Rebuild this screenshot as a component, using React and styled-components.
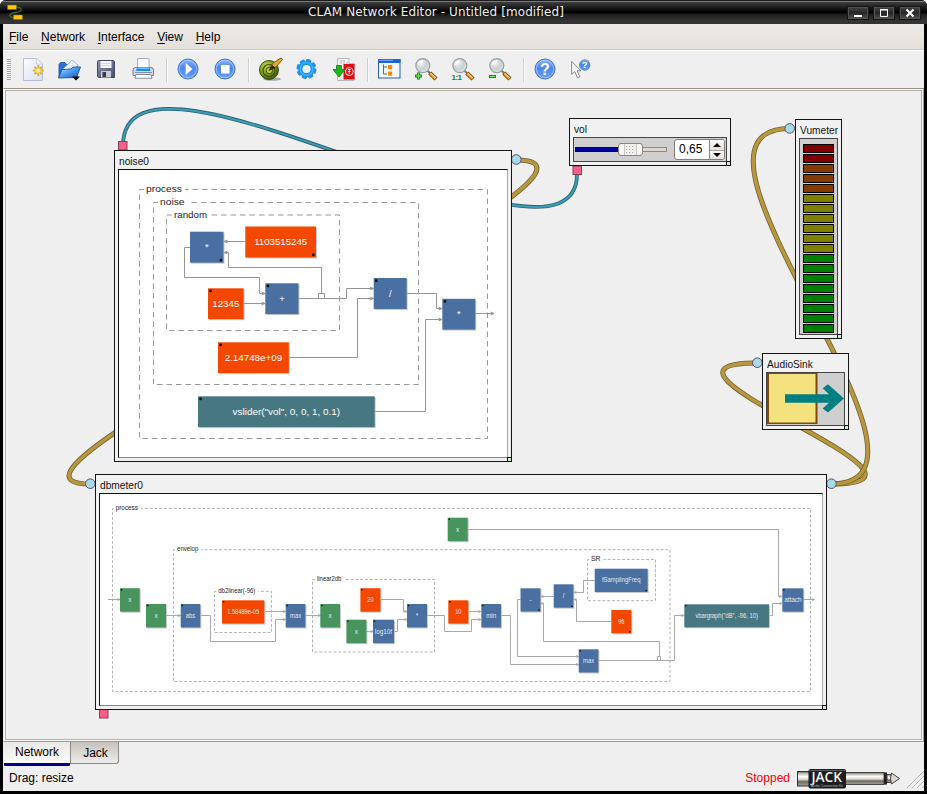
import React from "react";
import styled, { createGlobalStyle } from "styled-components";

const GlobalStyle = createGlobalStyle`
  html, body { margin: 0; padding: 0; background: #fff; }
  * { box-sizing: border-box; }
  svg { display: block; }
`;

const UI = '"Liberation Sans", Arial, sans-serif';

/* ---------- window frame ---------- */

const Window = styled.div`
  width: 927px;
  height: 794px;
  display: flex;
  flex-direction: column;
  background: #000;
  border-radius: 6px 6px 0 0;
  overflow: hidden;
  font: 12px/14px ${UI};
  color: #000;
`;

const TitleBar = styled.header`
  flex: none;
  height: 24px;
  display: flex;
  align-items: center;
  padding: 0 6px 0 7px;
  background: linear-gradient(#1c1c1c 0 1px, #7a7a7a 1px 2px, #3e3e3e 2px, #262626 6px, #060606 11px, #000 13px, #1c1c1c 14px, #343434 21px, #343434 24px);
`;

const Title = styled.h1`
  flex: 1;
  margin: 0;
  padding-left: 2px;
  font: 12px/24px "DejaVu Sans", sans-serif;
  letter-spacing: 0.09px;
  text-align: center;
  color: #eeeeee;
`;

const WindowButtons = styled.div`
  display: flex;
  gap: 4px;
  margin-top: 1px;
`;

const WindowButton = styled.button`
  width: 22px;
  height: 14px;
  padding: 0;
  display: grid;
  place-items: center;
  border: 1px solid #171717;
  outline: 0;
  background: linear-gradient(#444, #262626 50%, #555);
  box-shadow: inset 0 0 0 1px #505050;
`;

const Client = styled.div`
  flex: 1;
  display: flex;
  flex-direction: column;
  margin: 0 3px 3px;
  background: #efefef;
  min-height: 0;
`;

const MenuBar = styled.nav`
  height: 27px;
  flex: none;
  display: flex;
  gap: 12.7px;
  padding: 6px 0 0 6px;
  background: linear-gradient(#eeebe7, #e3dfd9);
  border-bottom: 1px solid #fff;
  box-shadow: inset 0 -1px #d0cbc5;
`;

const MenuItem = styled.span`
  &::first-letter {
    text-decoration: underline;
    text-decoration-thickness: 1px;
    text-underline-offset: 2px;
  }
  display: block;
`;

const ToolBar = styled.div`
  height: 37px;
  flex: none;
  display: flex;
  align-items: center;
`;

const Grip = styled.div`
  width: 4px;
  height: 22px;
  margin: 0 3px 0 4px;
  background: repeating-linear-gradient(#a9a49e 0 1px, #f4f4f4 1px 2px);
`;

const ToolButton = styled.button`
  width: 37px;
  height: 36px;
  padding: 0;
  border: 0;
  background: none;
  display: grid;
  place-items: center;
`;

const Separator = styled.div`
  width: 2px;
  height: 24px;
  margin: 0 2px 0 4px;
  background: linear-gradient(90deg, #d2cfcb 50%, #fafafa 50%);
`;

const CanvasFrame = styled.main`
  flex: none;
  height: 654px;
  border: 1px solid #aaa49b;
  border-color: #98938b #a59e96 #a39a94 #efefef;
  padding: 1px;
  background: #f7f5f2;
`;

const Canvas = styled.div`
  position: relative;
  width: 917px;
  height: 650px;
  border: 1px solid #b9b0a8;
  background: #efefef;
  overflow: hidden;
`;

/* ---------- canvas items ---------- */

const ORIGIN_X = 6;
const ORIGIN_Y = 91;

const Cables = styled.svg`
  position: absolute;
  left: 0;
  top: 0;
  width: 915px;
  height: 648px;
`;

const Node = styled.section`
  position: absolute;
  left: ${(p) => p.$x - ORIGIN_X}px;
  top: ${(p) => p.$y - ORIGIN_Y}px;
  width: ${(p) => p.$w}px;
  height: ${(p) => p.$h}px;
  display: flex;
  flex-direction: column;
  padding: 0 3px 3px;
  border: 1px solid #141414;
  background: #f1f1f1;
`;

const NodeTitle = styled.h2`
  flex: none;
  height: 18px;
  margin: 0;
  padding: 5px 0 0 1px;
  font: 10.2px/12px ${UI};
  color: #111;
  white-space: nowrap;
`;

const NodeBody = styled.div`
  flex: 1;
  min-height: 0;
  display: flex;
  border: 1px solid;
  border-color: ${(p) => (p.$plain ? "#111 #aaa #888 #111" : "#444")};
  background: ${(p) => (p.$plain ? "#fff" : "#cfcfcf")};
`;

const Resizer = styled.i`
  position: absolute;
  right: -1px;
  bottom: -1px;
  width: 5px;
  height: 5px;
  border: 1px solid #111;
  background: #cdf0cd;
`;

function Processing({ title, plain, children, ...box }) {
  return (
    <Node {...box}>
      <NodeTitle>{title}</NodeTitle>
      <NodeBody $plain={plain}>{children}</NodeBody>
      <Resizer />
    </Node>
  );
}

const VolumeRow = styled.div`
  flex: 1;
  display: flex;
  align-items: center;
  padding: 0 2px 0 1px;
  gap: 7px;
`;

const Groove = styled.div`
  width: 92px;
  height: 5px;
  display: flex;
  align-items: center;
  border: 1px solid #8f8a84;
  background: #ded6cd;
`;

const Filled = styled.div`
  width: 43px;
  height: 5px;
  flex: none;
  background: #00009c;
  border: 1px solid #000070;
  margin-left: -1px;
`;

const Handle = styled.div`
  flex: none;
  width: 25px;
  height: 13px;
  border: 1px solid #8b857f;
  border-radius: 3px;
  display: grid;
  place-items: center;
  background: linear-gradient(90deg, #f6f5f3 0 5px, #c9c5c0 5px 6px, #f1efed 6px 17px, #c9c5c0 17px 18px, #f6f5f3 18px);
`;

const SpinBox = styled.div`
  flex: none;
  width: 51px;
  height: 21px;
  display: flex;
  border: 1px solid #827d77;
  border-radius: 3px;
  background: #fff;
  overflow: hidden;
`;

const SpinValue = styled.span`
  flex: 1;
  padding: 2px 0 0 4px;
  font: 12px/14px ${UI};
`;

const SpinArrows = styled.div`
  width: 15px;
  display: grid;
  grid-template-rows: 1fr 1fr;
  border-left: 1px solid #8b857f;
`;

const SpinArrow = styled.span`
  display: grid;
  place-items: center;
  background: linear-gradient(#fafafa, #e4e0dc);
  & + & { border-top: 1px solid #a8a29c; }
`;

const Meter = styled.div`
  flex: 1;
  display: flex;
  flex-direction: column;
  align-items: center;
  gap: 1px;
  padding-top: 5px;
`;

const Led = styled.div`
  width: 31px;
  height: 9px;
  flex: none;
  border: 1px solid #000;
  background: ${(p) => p.$color};
`;

/* ---------- bottom area ---------- */

const Tabs = styled.div`
  flex: none;
  height: 23px;
  display: flex;
  align-items: flex-start;
`;

const Tab = styled.div`
  width: ${(p) => (p.$active ? 66 : 49)}px;
  height: ${(p) => (p.$active ? 24 : 22)}px;
  margin: ${(p) => (p.$active ? "0 0 0 1px" : "0")};
  padding: ${(p) => (p.$active ? "3px 0 0" : "4px 0 0 2px")};
  text-align: center;
  background: ${(p) => (p.$active ? "linear-gradient(#e9e8e6, #fbfbfa)" : "linear-gradient(#c6c1bb, #eeedec)")};
  border-style: solid;
  border-width: ${(p) => (p.$active ? "0 0 3px" : "0 1px 1px")};
  border-color: ${(p) => (p.$active ? "#00008c" : "#8d8781")};
  border-radius: ${(p) => (p.$active ? "0 0 1px 1px" : "0 0 3px 0")};
`;

const StatusBar = styled.footer`
  flex: 1;
  display: flex;
  align-items: center;
  padding: 0 0 0 6px;
`;

const StatusText = styled.span`
  flex: 1;
`;

const Stopped = styled.span`
  color: #ff0000;
  margin-right: 6px;
`;

const PlugSlot = styled.span`
  margin-right: 4px;
`;

/* ---------- toolbar icons ---------- */

const Icon = ({ children }) => (
  <svg width="25" height="25" viewBox="0 0 25 25">{children}</svg>
);

const HiddenSvg = styled.svg`
  position: absolute;
`;

const Defs = () => (
  <HiddenSvg width="0" height="0">
    <defs>
      <linearGradient id="blueBall" x1="0" y1="0" x2="0" y2="1">
        <stop offset="0" stopColor="#8db8fb" />
        <stop offset=".45" stopColor="#4a86f0" />
        <stop offset="1" stopColor="#6aa2ff" />
      </linearGradient>
      <linearGradient id="folder" x1="0" y1="0" x2="1" y2="1">
        <stop offset="0" stopColor="#bfe0ff" />
        <stop offset=".5" stopColor="#4a97ee" />
        <stop offset="1" stopColor="#1453bc" />
      </linearGradient>
      <linearGradient id="page" x1="0" y1="0" x2="1" y2="1">
        <stop offset="0" stopColor="#fdfdff" />
        <stop offset="1" stopColor="#d9dff2" />
      </linearGradient>
      <linearGradient id="disk" x1="0" y1="0" x2="1" y2="1">
        <stop offset="0" stopColor="#8d90ad" />
        <stop offset="1" stopColor="#4b4e66" />
      </linearGradient>
      <radialGradient id="lens" cx=".35" cy=".3" r=".8">
        <stop offset="0" stopColor="#f3f6f6" />
        <stop offset=".55" stopColor="#c8d1d1" />
        <stop offset="1" stopColor="#dfe6e6" />
      </radialGradient>
      <radialGradient id="olive" cx=".35" cy=".3" r=".8">
        <stop offset="0" stopColor="#c2d64a" />
        <stop offset=".6" stopColor="#6f8d10" />
        <stop offset="1" stopColor="#33450a" />
      </radialGradient>
      <linearGradient id="metal" x1="0" y1="0" x2="0" y2="1">
        <stop offset="0" stopColor="#55524c" />
        <stop offset=".12" stopColor="#b8b4a8" />
        <stop offset=".35" stopColor="#ffffff" />
        <stop offset=".55" stopColor="#d9d5c9" />
        <stop offset=".7" stopColor="#6e6a60" />
        <stop offset="1" stopColor="#a8a498" />
      </linearGradient>
    </defs>
  </HiddenSvg>
);

const NewIcon = () => (
  <Icon>
    <path d="M3.5 1.5H16.5L22.5 7V23.5H3.5Z" fill="url(#page)" stroke="#b6bdd4" />
    <path d="M16.5 1.5V7H22.5Z" fill="#fff" stroke="#c2c8dc" strokeWidth=".8" />
    <path d="M18.3 8v11M12.8 13.5h11M14.5 9.7l7.6 7.6M22.1 9.7l-7.6 7.6" stroke="#e9ad22" strokeWidth="2" />
    <circle cx="18.3" cy="13.5" r="2.6" fill="#fff3a0" stroke="#f2c63c" />
  </Icon>
);

const OpenIcon = () => (
  <Icon>
    <path d="M2 7.5 3.5 5.5H8L9.5 7.5H20V20H2Z" fill="#2a6fd6" stroke="#174fa8" strokeWidth=".8" />
    <path d="M6 12 15 3l6 5-6 9Z" fill="#f6f8ff" stroke="#8ea3d4" strokeWidth=".8" />
    <path d="M9 10l5-4.5M11 12l6-5" stroke="#c2cfee" />
    <path d="M1.5 21 5 12.5 14 12 16 10H23.5L19.5 20.5Z" fill="url(#folder)" stroke="#1550b4" strokeWidth=".9" />
    <path d="M15 19.5h8l-4 4Z" fill="#000" />
  </Icon>
);

const SaveIcon = () => (
  <Icon>
    <path d="M3.5 4.5Q3.5 3.5 4.5 3.5H19.5L20.5 4.5V20.5H4.5L3.5 19.5Z" fill="url(#disk)" stroke="#454861" />
    <path d="M6.5 4h11v7h-11Z" fill="#f4f5fb" />
    <path d="M7.5 6.5h9M7.5 8.5h9" stroke="#d2d5e4" />
    <path d="M7 14h10v6.5H7Z" fill="#c8cad9" />
    <path d="M8.5 15h3.5v5H8.5Z" fill="#363950" />
  </Icon>
);

const PrintIcon = () => (
  <Icon>
    <path d="M6.5 12V1.5H18V12" fill="#f7f9ff" stroke="#a7aec2" />
    <path d="M2 13Q2 10.5 4.5 10.5H20Q22.5 10.5 22.5 13V18.5H2Z" fill="#d4d7e4" stroke="#777d96" />
    <path d="M6 10.500h12.500l1 3.500H5Z" fill="#1c8bf0" />
    <path d="M6.500 11.200h11.500" stroke="#9cdcff" />
    <path d="M5 17.500h15l1 3.800H4Z" fill="#fff" stroke="#868ca3" />
    <path d="M4 15.500h17" stroke="#8a90a8" />
  </Icon>
);

const Ball = ({ r = 10 }) => (
  <>
    <circle cx="12" cy="12" r={r} fill="url(#blueBall)" stroke="#4674c8" />
    <circle cx="12" cy="12" r={r - 1.3} fill="none" stroke="#a9caff" strokeWidth=".8" />
  </>
);

const PlayIcon = () => (
  <Icon><Ball /><path d="M9.700 6 16.500 12 9.700 18Z" fill="#fff" /></Icon>
);

const StopIcon = () => (
  <Icon><Ball /><path d="M8 8h8.500v8.500H8Z" fill="#fff" /></Icon>
);

const TargetIcon = () => (
  <Icon>
    <ellipse cx="14" cy="22" rx="9" ry="1.8" fill="#555" opacity=".45" />
    <circle cx="11" cy="13" r="9.5" fill="url(#olive)" stroke="#3d5208" />
    <circle cx="11" cy="13.5" r="6" fill="none" stroke="#3c5008" strokeWidth="1.1" />
    <circle cx="11.3" cy="13.5" r="3.2" fill="#b5cf3e" stroke="#3d5208" />
    <path d="M11 13.5 15 6l8-5 1.500 1.500-6 7Z" fill="#e7a92c" stroke="#5c3a0a" strokeWidth=".8" />
    <path d="M11 13.5 14 8l3.500 3Z" fill="#2b2208" />
  </Icon>
);

const GearIcon = () => (
  <Icon>
    <g fill="#1e93ee">
      {[0, 45, 90, 135, 180, 225, 270, 315].map((a) => (
        <rect key={a} x="8.800" y="2" width="5.400" height="5" rx="1.500" transform={`rotate(${a + 15} 11.5 12)`} />
      ))}
    </g>
    <circle cx="11.5" cy="12" r="6.1" fill="none" stroke="#1e93ee" strokeWidth="4" />
    <circle cx="11.5" cy="12" r="6.4" fill="none" stroke="#49b0fb" strokeWidth="1.200" />
  </Icon>
);

const ExportIcon = () => (
  <Icon>
    <path d="M5.5 1.5H17L22 6.5V23.5H5.5Z" fill="#f2f2f4" stroke="#b9b9c0" />
    <path d="M8 4h6M8 6h8" stroke="#aeb0c0" strokeDasharray="2 1" />
    <path d="M17 1.5V6.5H22" fill="#fff" stroke="#b9b9c0" />
    <rect x="11.5" y="7" width="11" height="15.5" fill="#d90f14" />
    <circle cx="17.3" cy="14.6" r="3.8" fill="none" stroke="#ffc9c9" strokeWidth="1.1" />
    <path d="M16 12.5h2.5M16 14.5h2.5M17.2 12v5" stroke="#fff" strokeWidth=".9" />
    <path d="M4.500 8.500h5v4H13L7 20 1 12.500h3.500Z" fill="#1fb41f" stroke="#0a7d0a" strokeWidth=".8" />
  </Icon>
);

const TreeIcon = () => (
  <Icon>
    <rect x="1.5" y="2.5" width="21.5" height="18.5" fill="#f2f6fd" stroke="#2a5eb0" />
    <rect x="1" y="2" width="22.5" height="4" fill="#1c62dd" />
    <path d="M2 3.3h14" stroke="#7db0ff" />
    <path d="M6.5 7.500v9.500H10M6.5 10H10" fill="none" stroke="#666" />
    <rect x="11" y="8" width="4.2" height="4.2" fill="#fb8a0a" />
    <rect x="11" y="14.5" width="4.2" height="4.2" fill="#fb8a0a" />
  </Icon>
);

const Loupe = ({ children }) => (
  <Icon>
    <path d="M13.5 13.700 17 17" stroke="#777" strokeWidth="2" />
    <path d="M15.800 16 22 22" stroke="#73410a" strokeWidth="4.4" />
    <path d="M16.200 16.400 21.5 21.5" stroke="#f3a83a" strokeWidth="2.6" />
    <path d="M16.700 16 21.8 20.7" stroke="#ffe3ac" strokeWidth=".8" />
    <circle cx="8.8" cy="8.600" r="7" fill="url(#lens)" stroke="#9a9f9f" strokeWidth="1.2" />
    <path d="M4.5 8Q5 4.5 9 4" fill="none" stroke="#fff" strokeWidth="1.4" />
    {children}
  </Icon>
);

const ZoomInIcon = () => (
  <Loupe>
    <path d="M4.5 15.5v7M1 19h7" stroke="#0c8a0c" strokeWidth="3" />
    <path d="M4.5 16.300v5.400M1.800 19h5.400" stroke="#7cf06a" strokeWidth="1.1" />
  </Loupe>
);
const ZoomOutIcon = () => (
  <Loupe>
    <path d="M1 19.5h7" stroke="#0c8a0c" strokeWidth="3" />
    <path d="M1.800 19.500h5.400" stroke="#7cf06a" strokeWidth="1.1" />
  </Loupe>
);
const ZoomResetIcon = () => (
  <Loupe>
    <text x=".5" y="22.8" fontFamily="Liberation Sans" fontWeight="700" fontSize="8" textLength="10.5" fill="#0b8a0b">1:1</text>
  </Loupe>
);

const HelpIcon = () => (
  <Icon>
    <Ball />
    <text x="12" y="17.8" textAnchor="middle" fontFamily="Liberation Sans" fontWeight="700" fontSize="16" fill="#fff">?</text>
  </Icon>
);

const WhatsThisIcon = () => (
  <Icon>
    <path d="M1.7 4.5V17.3L4.8 14.6 7.5 20.8 9.8 19.7 7.2 13.8H11Z" fill="#fff" stroke="#777" strokeWidth=".9" />
    <circle cx="14.7" cy="8" r="5.2" fill="url(#blueBall)" stroke="#3b6bc8" strokeWidth=".7" />
    <text x="14.8" y="11.3" textAnchor="middle" fontFamily="Liberation Sans" fontWeight="700" fontSize="9" fill="#fff">?</text>
  </Icon>
);

const TOOLS = [
  [NewIcon, OpenIcon, SaveIcon, PrintIcon],
  [PlayIcon, StopIcon],
  [TargetIcon, GearIcon, ExportIcon],
  [TreeIcon, ZoomInIcon, ZoomResetIcon, ZoomOutIcon],
  [HelpIcon, WhatsThisIcon],
];

/* ---------- block diagrams ---------- */

const BLUE = "#4a6fa1";
const ORANGE = "#f44800";
const GREEN = "#47945e";
const TEAL = "#477881";

function Group({ x, y, r, b, label, lx, lw, size, small }) {
  const dash = small ? "3 1.8" : "5.5 4";
  return (
    <g>
      <path
        d={`M${lx - 2} ${y}H${x}V${b}H${r}V${y}H${lx + lw + 3}`}
        fill="none"
        stroke={small ? "#b5b5b5" : "#999"}
        strokeDasharray={dash}
      />
      <text x={lx} y={y + size * 0.27} fontSize={size} textLength={lw} lengthAdjust="spacingAndGlyphs" fill="#222">{label}</text>
    </g>
  );
}

function Block({ x, y, w, h, fill, label, tw, size, dot = "tl" }) {
  const d = size > 8 ? 2.6 : 1.5;
  const gap = size > 8 ? 1.3 : 0.8;
  const dx = dot === "tl" ? x + gap : x + w - gap - d;
  const dy = dot === "tl" ? y + gap : y + h - gap - d;
  return (
    <g>
      <rect x={x + 1} y={y + 1} width={w} height={h} fill="#bbb" opacity=".8" />
      <rect x={x} y={y} width={w} height={h} fill={fill} />
      <rect x={dx} y={dy} width={d} height={d} rx={d / 3} fill="#111" />
      <text
        x={x + w / 2}
        y={y + h / 2 + size * 0.33}
        textAnchor="middle"
        fontSize={size}
        textLength={tw}
        lengthAdjust="spacingAndGlyphs"
        fill={size > 8 ? "#fff" : "#e4e9ee"}
      >
        {label}
      </text>
    </g>
  );
}

function Wires({ lines, arrows, a, color }) {
  return (
    <g fill="none" stroke={color} strokeWidth="1">
      {lines.map((d) => <path key={d} d={d} />)}
      {arrows.map(([x, y, s = 1]) => (
        <path key={`${x},${y}`} d={`M${x - a * 1.6 * s} ${y - a * 0.65}L${x} ${y}L${x - a * 1.6 * s} ${y + a * 0.65}`} />
      ))}
    </g>
  );
}

const NOISE_GROUPS = [
  { x: 139.5, y: 189.5, r: 487.5, b: 438.5, label: "process", lx: 146, lw: 36 },
  { x: 153.5, y: 202.5, r: 418.5, b: 384.5, label: "noise", lx: 160, lw: 24.5 },
  { x: 166.5, y: 215, r: 339.5, b: 330.5, label: "random", lx: 174, lw: 33 },
];
const NOISE_BLOCKS = [
  { x: 190, y: 231.7, w: 33.5, h: 31, fill: BLUE, label: "*", dot: "br" },
  { x: 245.3, y: 226.5, w: 70.7, h: 31, fill: ORANGE, label: "1103515245", tw: 53, dot: "br" },
  { x: 208, y: 288.3, w: 35.6, h: 30.8, fill: ORANGE, label: "12345", tw: 27 },
  { x: 265.3, y: 283.3, w: 33.2, h: 30.8, fill: BLUE, label: "+" },
  { x: 373.7, y: 278, w: 33, h: 31, fill: BLUE, label: "/" },
  { x: 442.3, y: 298.8, w: 33, h: 30.8, fill: BLUE, label: "*" },
  { x: 218, y: 342.3, w: 70.8, h: 30.8, fill: ORANGE, label: "2.14748e+09", tw: 57.5 },
  { x: 198, y: 396.3, w: 176.7, h: 30.8, fill: TEAL, label: 'vslider("vol", 0, 0, 1, 0.1)', tw: 107.5 },
];
const NOISE_WIRES = [
  "M245 241.5H224",
  "M190 247.5H184.5V277.5H259.5V293.5H265",
  "M321.5 293.5V267.5H228.5V252.5H224",
  "M318.5 298.5V293.5H324.5V298.5",
  "M298 298.5H346.5V288.5H373.5",
  "M243 303.5H265",
  "M289 357.5H357.5V298.5H373.5",
  "M406.5 293.5H436.5V308.5H442",
  "M375 411.5H425.5V319.5H442",
  "M475 313.5H494",
];
const NOISE_ARROWS = [
  [224, 241.5, -1], [224, 252.5, -1], [265, 293.5], [265, 303.5],
  [373.5, 288.5], [373.5, 298.5], [442, 308.5], [442, 319.5], [494, 313.5],
];

const NoiseDiagram = () => (
  <svg width="388" height="288" viewBox="119 170 388 288" fontFamily="Liberation Sans, Arial, sans-serif">
    {NOISE_GROUPS.map((g) => <Group key={g.label} size={9.3} {...g} />)}
    <Wires lines={NOISE_WIRES} arrows={NOISE_ARROWS} a={2.2} color="#959595" />
    {NOISE_BLOCKS.map((b) => <Block key={`${b.x}${b.label}`} size={9.3} {...b} />)}
  </svg>
);

const METER_GROUPS = [
  { x: 112.5, y: 508.5, r: 810.5, b: 691.5, label: "process", lx: 115.7, lw: 22.3 },
  { x: 173.5, y: 549.7, r: 670, b: 681.5, label: "envelop", lx: 177, lw: 21.3 },
  { x: 214.5, y: 591.3, r: 271.5, b: 632.5, label: "db2linear(-96)", lx: 218.3, lw: 37 },
  { x: 312.5, y: 579.5, r: 434.5, b: 652, label: "linear2db", lx: 317, lw: 24.3 },
  { x: 587.5, y: 559.5, r: 655.5, b: 600.7, label: "SR", lx: 591, lw: 9.6 },
];
const METER_BLOCKS = [
  { x: 120, y: 588.2, w: 19.7, h: 23.5, fill: GREEN, label: "x" },
  { x: 146, y: 604, w: 20, h: 23.5, fill: GREEN, label: "x" },
  { x: 180.7, y: 604, w: 19.6, h: 23.5, fill: BLUE, label: "abs", tw: 9.3 },
  { x: 222, y: 600.3, w: 42.3, h: 23.3, fill: ORANGE, label: "1.58489e-05", tw: 32 },
  { x: 285.7, y: 604, w: 19.7, h: 23.5, fill: BLUE, label: "max", tw: 11 },
  { x: 320.3, y: 604, w: 19.7, h: 23.5, fill: GREEN, label: "x" },
  { x: 346.4, y: 619.7, w: 20, h: 23.5, fill: GREEN, label: "x" },
  { x: 373, y: 619.7, w: 21, h: 23.5, fill: BLUE, label: "log10f", tw: 17.3 },
  { x: 360.4, y: 588.2, w: 20, h: 23.5, fill: ORANGE, label: "20", tw: 6.3 },
  { x: 407, y: 604, w: 20, h: 23.5, fill: BLUE, label: "*" },
  { x: 448.3, y: 600.3, w: 20, h: 23.3, fill: ORANGE, label: "10", tw: 6.3 },
  { x: 481.3, y: 604, w: 19.7, h: 23.5, fill: BLUE, label: "min", tw: 10 },
  { x: 447.7, y: 517.7, w: 20, h: 23.5, fill: GREEN, label: "x" },
  { x: 520.5, y: 588.3, w: 20, h: 23.3, fill: BLUE, label: "-", dot: "br" },
  { x: 553.7, y: 584.3, w: 19.7, h: 23.4, fill: BLUE, label: "/", dot: "br" },
  { x: 594.7, y: 568.7, w: 53, h: 23.3, fill: BLUE, label: "fSamplingFreq", tw: 38.5, dot: "br" },
  { x: 611.3, y: 610, w: 20, h: 23.3, fill: ORANGE, label: "96", tw: 6.3, dot: "br" },
  { x: 578.7, y: 649.3, w: 19.7, h: 23.2, fill: BLUE, label: "max", tw: 11 },
  { x: 684.3, y: 604.3, w: 84.7, h: 23, fill: TEAL, label: 'vbargraph("dB", -96, 10)', tw: 62.5 },
  { x: 782.3, y: 588.3, w: 21, h: 23.4, fill: BLUE, label: "attach", tw: 17.3 },
];
const METER_WIRES = [
  "M108 599.5H120",
  "M166 615.5H180.5",
  "M200.5 615.5H210.5V641.5H275.5V619.5H285.5",
  "M264.5 611.5H285.5",
  "M305.5 615.5H320.5",
  "M380.5 599.5H403.5V611.5H407",
  "M366.5 631.5H373",
  "M394 631.5H397.5V619.5H407",
  "M427 615.5H444.5V631.5H471.5V619.5H481",
  "M468.5 611.5H481",
  "M501 615.5H510.5V664.5H578.5",
  "M520.5 599.5H517.5V656.5H578.5",
  "M553.5 596.5H540.5",
  "M594.5 580.5H583.5V592.5H573.5",
  "M611.5 621.5H576.5V599.5H573.5",
  "M598.5 660.5H674.5V615.5H684",
  "M657.5 660.5V656.5H660.5V660.5",
  "M659.5 656.5V641.5H543.5V603.5H540.5",
  "M769 615.5H772.5V603.5H782",
  "M467.5 529.5H778.5V596.5H782",
  "M803.5 599.5H814.5",
];
const METER_ARROWS = [
  [120, 599.5], [180.5, 615.5], [285.5, 619.5], [285.5, 611.5], [320.5, 615.5], [407, 611.5],
  [373, 631.5], [407, 619.5], [481, 619.5], [481, 611.5], [578.5, 664.5], [578.5, 656.5],
  [541, 596.5, -1], [574, 592.5, -1], [574, 599.5, -1], [684, 615.5], [541, 603.5, -1],
  [782, 603.5], [782, 596.5], [814.5, 599.5],
];

const MeterDiagram = () => (
  <svg width="722" height="211" viewBox="100 494 722 211" fontFamily="Liberation Sans, Arial, sans-serif">
    {METER_GROUPS.map((g) => <Group key={g.label} size={6.6} small {...g} />)}
    <Wires lines={METER_WIRES} arrows={METER_ARROWS} a={1.5} color="#a8a8a8" />
    {METER_BLOCKS.map((b) => <Block key={`${b.x}${b.label}`} size={6.4} {...b} />)}
  </svg>
);

const CONTROL_CABLE = "M577 174C577 301 123 10 123 146";
const AUDIO_CABLES = [
  "M516 160C668 160 -62 484 90 484",
  "M831 484C974 484 614 363 757 363",
  "M831 484C973 484 648 128.5 790 128.5",
];
const CONTROL_PORTS = [[118.5, 141.5], [573, 166], [99.5, 709.5]];
const AUDIO_PORTS = [[516.3, 159.5], [90.3, 483.7], [789.7, 128.4], [757.3, 362.7], [831.4, 483.7]];

const CableLayer = () => (
  <Cables viewBox="6 91 915 648" fill="none">
    <path d={CONTROL_CABLE} stroke="#2b6470" strokeWidth="3.8" />
    <path d={CONTROL_CABLE} stroke="#3f9cb8" strokeWidth="2" />
    {AUDIO_CABLES.map((d) => (
      <g key={d}>
        <path d={d} stroke="#6f6530" strokeWidth="5" />
        <path d={d} stroke="#b9963f" strokeWidth="3.4" />
      </g>
    ))}
    {CONTROL_PORTS.map(([x, y]) => (
      <rect key={x} x={x} y={y} width="8.5" height="8.5" fill="#f95f86" stroke="#86405a" />
    ))}
    {AUDIO_PORTS.map(([x, y]) => (
      <circle key={x} cx={x} cy={y} r="4.8" fill="#a8dbea" stroke="#5d4c62" />
    ))}
  </Cables>
);

const LEDS = [
  ...Array(2).fill("#800000"),
  ...Array(3).fill("#853b00"),
  ...Array(6).fill("#808000"),
  ...Array(8).fill("#008000"),
];

const SinkArt = () => (
  <svg width="77" height="51" viewBox="767 374 77 51">
    <rect x="768" y="374" width="48.5" height="50.5" fill="#f4e27e" stroke="#7d4a08" strokeWidth="2" />
    <path d="M785 395.3H829L822.7 389.3 828 385.3 844 399.4 828 413.5 822.7 409.5 829 403.7H785Z" fill="#008080" />
  </svg>
);

const JackPlug = () => (
  <svg width="106" height="21" viewBox="796 768 106 21">
    <rect x="797.5" y="771.5" width="12" height="14.5" fill="url(#metal)" stroke="#333" />
    <rect x="845" y="772.5" width="39" height="12" fill="url(#metal)" stroke="#444" />
    <path d="M884 772.5h3v12h-3z" fill="#222" />
    <path d="M887 774.5h4v8h-4z" fill="url(#metal)" stroke="#444" />
    <path d="M891.5 773l8 5.5-8 5.5-1-5.5z" fill="#dad7cc" stroke="#444" />
    <rect x="808.5" y="769" width="37.5" height="19.5" rx="2" fill="#1c1e1f" />
    <path d="M809 770.5h36.5" stroke="#5c6062" />
    <text x="811.5" y="782.3" fontFamily="Open Sans" fontWeight="600" fontSize="14.2" textLength="30.5" lengthAdjust="spacingAndGlyphs" fill="#f2f2f2">JACK</text>
    <text x="811" y="786.8" fontFamily="Liberation Sans" fontSize="3.6" textLength="32" fill="#aaa">Audio Connection Kit</text>
  </svg>
);

const SizeGrip = () => (
  <svg width="18" height="20" viewBox="0 0 18 20">
    <path d="M1 20 18 3M6 20 18 8M11 20 18 13M16 20l2-2" stroke="#b5b0ab" />
    <path d="M2 20 18 4M7 20 18 9M12 20 18 14" stroke="#fff" />
  </svg>
);

const AppIcon = () => (
  <svg width="16" height="16" viewBox="0 0 16 16">
    <path d="M8 3.5C16 2 16 8 9 8.5S0 13 7 13.5" fill="none" stroke="#3f6a2a" strokeWidth="1.3" />
    <rect x=".5" y="1" width="9" height="4.5" fill="#fbc50c" stroke="#8a6500" strokeWidth=".5" />
    <rect x="6.5" y="11" width="9" height="4.5" fill="#fbc50c" stroke="#8a6500" strokeWidth=".5" />
  </svg>
);

export default function App() {
  return (
    <>
      <GlobalStyle />
      <Defs />
      <Window>
        <TitleBar>
          <AppIcon />
          <Title>CLAM Network Editor - Untitled [modified]</Title>
          <WindowButtons>
            <WindowButton>
              <svg width="10" height="10"><path d="M1 8h8" stroke="#fff" strokeWidth="2" /></svg>
            </WindowButton>
            <WindowButton>
              <svg width="10" height="10"><path d="M1.5 1.5h7v7h-7zM1 2h8" fill="none" stroke="#fff" /></svg>
            </WindowButton>
            <WindowButton>
              <svg width="10" height="10"><path d="M1.5 1.5l7 7M8.5 1.5l-7 7" stroke="#fff" strokeWidth="2" /></svg>
            </WindowButton>
          </WindowButtons>
        </TitleBar>
        <Client>
          <MenuBar>
            {["File", "Network", "Interface", "View", "Help"].map((m) => <MenuItem key={m}>{m}</MenuItem>)}
          </MenuBar>
          <ToolBar>
            <Grip />
            {TOOLS.map((group, i) => (
              <React.Fragment key={i}>
                {i > 0 && <Separator />}
                {group.map((Glyph, j) => <ToolButton key={j}><Glyph /></ToolButton>)}
              </React.Fragment>
            ))}
          </ToolBar>
          <CanvasFrame>
            <Canvas>
              <CableLayer />
              <Processing title="noise0" plain $x={114} $y={150} $w={398} $h={312}>
                <NoiseDiagram />
              </Processing>
              <Processing title="dbmeter0" plain $x={95} $y={474} $w={732} $h={236}>
                <MeterDiagram />
              </Processing>
              <Processing title="vol" $x={569} $y={118} $w={162} $h={48}>
                <VolumeRow>
                  <Groove><Filled /><Handle>
                    <svg width="9" height="9">
                      <path d="M0 1.5h9M0 4.5h9M0 7.5h9" stroke="#aaa5a0" strokeDasharray="1 2" />
                    </svg>
                  </Handle></Groove>
                  <SpinBox>
                    <SpinValue>0,65</SpinValue>
                    <SpinArrows>
                      <SpinArrow><svg width="8" height="4"><path d="M0 4 4 0l4 4z" /></svg></SpinArrow>
                      <SpinArrow><svg width="8" height="4"><path d="M0 0 4 4l4-4z" /></svg></SpinArrow>
                    </SpinArrows>
                  </SpinBox>
                </VolumeRow>
              </Processing>
              <Processing title="Vumeter" $x={795} $y={119} $w={47} $h={220}>
                <Meter>{LEDS.map((c, i) => <Led key={i} $color={c} />)}</Meter>
              </Processing>
              <Processing title="AudioSink" $x={762} $y={353} $w={87} $h={77}>
                <SinkArt />
              </Processing>
            </Canvas>
          </CanvasFrame>
          <Tabs>
            <Tab $active>Network</Tab>
            <Tab>Jack</Tab>
          </Tabs>
          <StatusBar>
            <StatusText>Drag: resize</StatusText>
            <Stopped>Stopped</Stopped>
            <PlugSlot><JackPlug /></PlugSlot>
            <SizeGrip />
          </StatusBar>
        </Client>
      </Window>
    </>
  );
}
